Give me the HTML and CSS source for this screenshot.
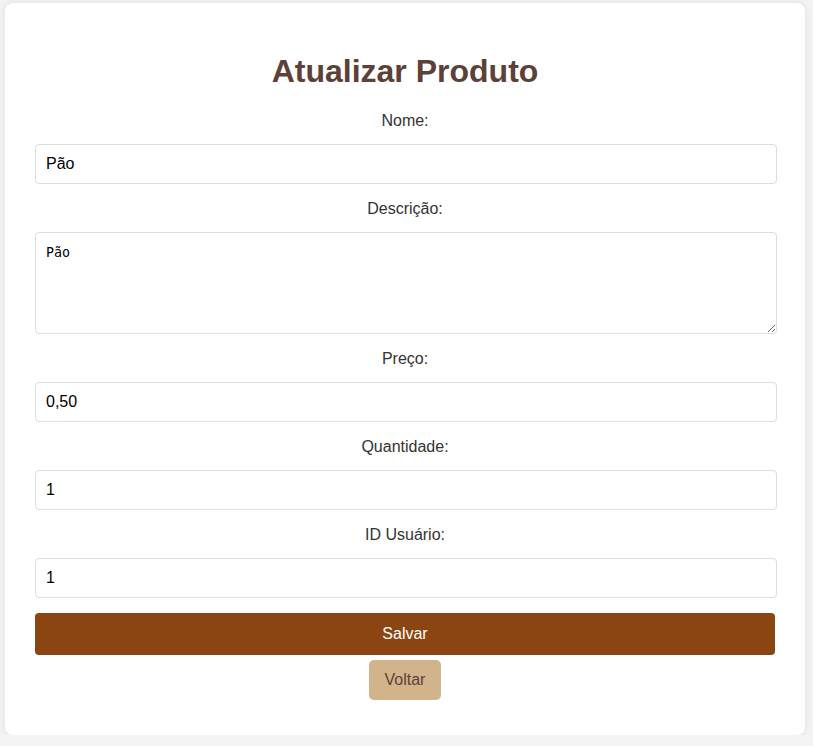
FILE: index.html
```html
<!DOCTYPE html>
<html lang="pt-BR">
<head>
<meta charset="utf-8">
<title>Atualizar Produto</title>
<link rel="stylesheet" href="styles.css">
</head>
<body>
<div class="card">
  <h2 class="title">Atualizar Produto</h2>
  <form class="form">
    <label class="label" for="nome">Nome:</label>
    <input class="field" id="nome" type="text" value="Pão">
    <label class="label" for="descricao">Descrição:</label>
    <textarea class="field area" id="descricao">Pão</textarea>
    <label class="label" for="preco">Preço:</label>
    <input class="field" id="preco" type="text" value="0,50">
    <label class="label" for="qtd">Quantidade:</label>
    <input class="field" id="qtd" type="text" value="1">
    <label class="label" for="usuario">ID Usuário:</label>
    <input class="field" id="usuario" type="text" value="1">
    <button class="save" type="button">Salvar</button>
    <button class="back" type="button">Voltar</button>
  </form>
</div>
</body>
</html>
```
FILE: styles.css
```css
html, body {
  margin: 0;
  padding: 0;
}
body {
  background: #f4f4f4;
  font-family: "Liberation Sans", Arial, sans-serif;
  padding: 3px 8px 0 5px;
}
.card {
  width: 740px;
  padding: 30px 30px 35px;
  background: #ffffff;
  border-radius: 8px;
  box-shadow: 0 0 10px rgba(0, 0, 0, 0.1);
}
.title {
  margin: 20px 0 6px;
  text-align: center;
  font-size: 32px;
  font-weight: bold;
  color: #5d4037;
  line-height: 37px;
}
.form {
  display: flex;
  flex-direction: column;
  align-items: stretch;
}
.label {
  display: block;
  text-align: center;
  font-size: 16px;
  color: #333333;
  margin: 16px 0 0;
  line-height: 18px;
}
.field {
  display: block;
  width: 720px;
  margin: 14px 0 0;
  padding: 10px;
  font-family: "Liberation Sans", Arial, sans-serif;
  font-size: 16px;
  line-height: 18px;
  color: #000;
  border: 1px solid #dddddd;
  border-radius: 4px;
  background: #fff;
}
.area {
  height: 80px;
  padding-top: 12px;
  padding-bottom: 8px;
  font-family: "DejaVu Sans Mono", monospace;
  font-size: 13.33px;
  line-height: 16px;
  resize: vertical;
}
.save {
  margin: 15px 0 0;
  width: 740px;
  height: 42px;
  border: none;
  border-radius: 4px;
  background: #8b4513;
  color: #ffffff;
  font-family: "Liberation Sans", Arial, sans-serif;
  font-size: 16px;
}
.back {
  align-self: center;
  margin: 5px 0 0;
  width: 72px;
  height: 40px;
  border: none;
  border-radius: 5px;
  background: #d2b48c;
  color: #5d4037;
  font-family: "Liberation Sans", Arial, sans-serif;
  font-size: 16px;
}
```
